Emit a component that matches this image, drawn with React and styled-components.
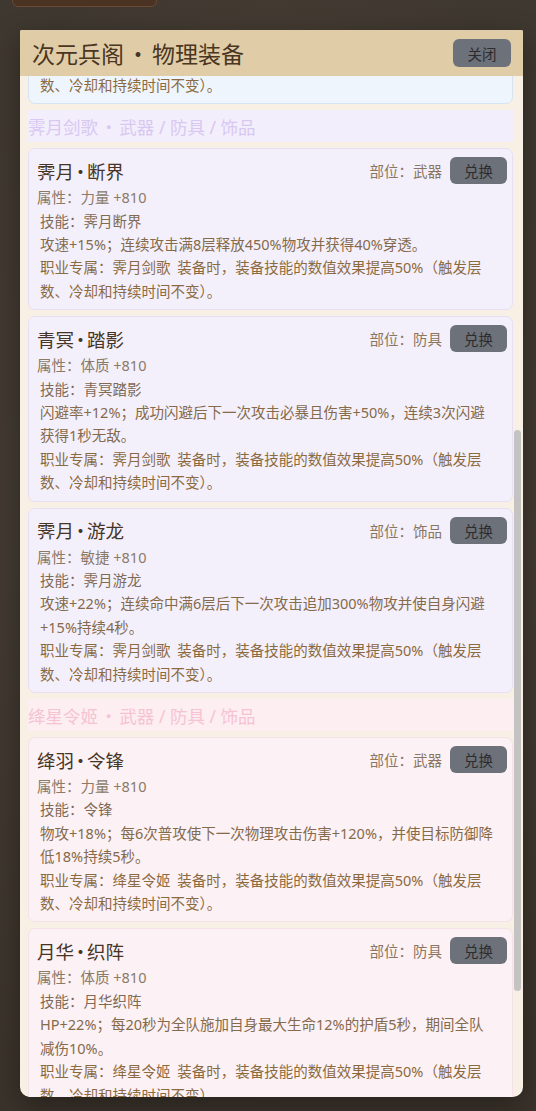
import React, { useLayoutEffect, useRef, useState, useCallback } from "react";
import styled, { createGlobalStyle } from "styled-components";

const GlobalStyle = createGlobalStyle`
  html, body { margin: 0; padding: 0; height: 100%; }
  body {
    overflow: hidden;
    font-family: "Noto Sans", "Noto Sans CJK SC", sans-serif;
    background: #3d362e;
  }
  #root { height: 100%; }
`;

const tones = {
  blue: { card: "#eef5fd", border: "#d5e3f2", band: "#eaf2fb", text: "#bcd2ee" },
  purple: { card: "#f4f0fb", border: "#e7dff3", band: "#f3eefb", text: "#d8c8f2" },
  pink: { card: "#fcf1f5", border: "#f4e2e8", band: "#fdeef2", text: "#f6c3d2" },
};

const Scene = styled.div`
  position: fixed;
  inset: 0;
  background:
    radial-gradient(ellipse at 50% 40%, rgba(90, 78, 64, 0.35), rgba(0, 0, 0, 0) 70%),
    linear-gradient(180deg, #3f3830 0%, #433b32 50%, #3a332b 100%);
`;

const TopPlank = styled.div`
  position: absolute;
  left: 12px;
  top: -10px;
  width: 143px;
  height: 15px;
  border-radius: 0 0 6px 6px;
  background: #4a3323;
  border: 1px solid #6a4a32;
`;

const Modal = styled.div`
  position: fixed;
  left: 20px;
  top: 30px;
  width: 503px;
  bottom: 14px;
  display: flex;
  flex-direction: column;
  background: #f8f0e4;
  border-radius: 2px 2px 10px 10px;
  overflow: hidden;
  box-shadow: 0 8px 28px rgba(0, 0, 0, 0.35);
`;

const Header = styled.div`
  flex: none;
  height: 46px;
  padding: 0 12px;
  display: flex;
  align-items: center;
  justify-content: space-between;
  background: #e0cda8;
`;

const Title = styled.h2`
  margin: 0;
  font-size: 23px;
  font-weight: 400;
  color: #4a3621;
`;

/* CJK-style middle dot, a little tighter than a full-width one */
const Dot = styled.span`
  font-family: "Noto Sans CJK SC", sans-serif;
  margin: 0 -0.15em;
`;

const GrayButton = styled.button`
  flex: none;
  width: ${(p) => p.$w}px;
  height: ${(p) => p.$h}px;
  padding: 0;
  border: 0;
  border-radius: 6px;
  background: #6c717a;
  color: #2c2c2e;
  font-family: inherit;
  font-size: 14.5px;
  cursor: pointer;
`;

const BodyWrap = styled.div`
  flex: 1;
  min-height: 0;
  position: relative;
`;

const Body = styled.div`
  position: relative;
  height: 100%;
  box-sizing: border-box;
  overflow-y: auto;
  padding: 0 10px 8px 8px;
  scrollbar-width: none;
  &::-webkit-scrollbar { display: none; }
`;

const Thumb = styled.div`
  position: absolute;
  right: 2px;
  width: 7px;
  border-radius: 4px;
  background: #c4c3c1;
  pointer-events: none;
`;

const List = styled.div`
  display: flex;
  flex-direction: column;
  gap: 6px;
  padding-top: 18px;
`;

const SectionBar = styled.div`
  height: 32px;
  display: flex;
  align-items: center;
  font-size: 17.5px;
  color: ${(p) => p.$tone.text};
  background: ${(p) => p.$tone.band};
  white-space: pre;
`;

const Card = styled.div`
  background: ${(p) => p.$tone.card};
  border: 1px solid ${(p) => p.$tone.border};
  border-radius: 7px;
  padding: 8px 8px 6px;
`;

const CardHead = styled.div`
  display: flex;
  align-items: center;
  justify-content: space-between;
  margin: 0 -3px 2px 0;
`;

const ItemName = styled.div`
  font-size: 18.5px;
  font-weight: 400;
  color: #463526;
  white-space: pre;
`;

const Slot = styled.div`
  display: flex;
  align-items: center;
  gap: 8px;
  font-size: 14.5px;
  color: #8a7560;
`;

const Line = styled.div`
  font-size: 14.5px;
  line-height: 23.4px;
  color: ${(p) => p.$color || "#8a7a68"};
  word-spacing: ${(p) => (p.$wide ? "3px" : "0")};
`;

const SkillBlock = styled.div`
  padding: 0 8px 0 3px;
`;

function Dotted({ text }) {
  const [a, b] = text.split("·");
  return (
    <>
      {a}
      <Dot>·</Dot>
      {b}
    </>
  );
}

const sections = [
  {
    key: "cang",
    tone: "blue",
    title: ["苍岚枪客 ", " 武器 / 防具 / 饰品"],
    items: [
      {
        name: "苍岚·破阵",
        slot: "武器",
        attr: "力量 +810",
        skill: "苍岚破阵",
        desc: "物攻+16%；每第4次攻击造成范围伤害（260%物攻），并使命中目标受到的物理伤害提高12%持续4秒，可叠加2层；叠满时自身暴击伤害额外提高15%，持续期间每次命中回复1%生命。",
        cls: "苍岚枪客",
      },
      {
        name: "苍岚·磐石",
        slot: "防具",
        attr: "体质 +810",
        skill: "苍岚磐石",
        desc: "HP+20%；受到攻击时有20%概率获得吸收最大生命8%伤害的护盾，持续3秒，护盾存在期间受到的控制效果持续时间缩短30%。",
        cls: "苍岚枪客",
      },
      {
        name: "苍岚·逐风",
        slot: "饰品",
        attr: "敏捷 +810",
        skill: "苍岚逐风",
        desc: "暴击率+10%；暴击后提高自身攻速18%与移速10%持续3秒，冷却期间再次暴击可刷新持续时间并额外回复2%生命；生命低于30%时，攻速加成翻倍，并免疫一次致命伤害（每场战斗限1次）。",
        cls: "苍岚枪客",
      },
    ],
  },
  {
    key: "ji",
    tone: "purple",
    title: ["霁月剑歌 ", " 武器 / 防具 / 饰品"],
    anchor: true,
    items: [
      {
        name: "霁月·断界",
        slot: "武器",
        attr: "力量 +810",
        skill: "霁月断界",
        desc: "攻速+15%；连续攻击满8层释放450%物攻并获得40%穿透。",
        cls: "霁月剑歌",
      },
      {
        name: "青冥·踏影",
        slot: "防具",
        attr: "体质 +810",
        skill: "青冥踏影",
        desc: "闪避率+12%；成功闪避后下一次攻击必暴且伤害+50%，连续3次闪避获得1秒无敌。",
        cls: "霁月剑歌",
      },
      {
        name: "霁月·游龙",
        slot: "饰品",
        attr: "敏捷 +810",
        skill: "霁月游龙",
        desc: "攻速+22%；连续命中满6层后下一次攻击追加300%物攻并使自身闪避+15%持续4秒。",
        cls: "霁月剑歌",
      },
    ],
  },
  {
    key: "jiang",
    tone: "pink",
    title: ["绛星令姬 ", " 武器 / 防具 / 饰品"],
    items: [
      {
        name: "绛羽·令锋",
        slot: "武器",
        attr: "力量 +810",
        skill: "令锋",
        desc: "物攻+18%；每6次普攻使下一次物理攻击伤害+120%，并使目标防御降低18%持续5秒。",
        cls: "绛星令姬",
      },
      {
        name: "月华·织阵",
        slot: "防具",
        attr: "体质 +810",
        skill: "月华织阵",
        desc: "HP+22%；每20秒为全队施加自身最大生命12%的护盾5秒，期间全队减伤10%。",
        cls: "绛星令姬",
      },
      {
        name: "星芒·流萤",
        slot: "饰品",
        attr: "敏捷 +810",
        skill: "星芒流萤",
        desc: "暴击率+12%；暴击后提高自身攻速20%持续3秒。",
        cls: "绛星令姬",
      },
    ],
  },
];

function ItemCard({ item, tone }) {
  return (
    <Card $tone={tone}>
      <CardHead>
        <ItemName>
          <Dotted text={item.name} />
        </ItemName>
        <Slot>
          <span>部位：{item.slot}</span>
          <GrayButton $w={57} $h={27}>兑换</GrayButton>
        </Slot>
      </CardHead>
      <Line>属性：{item.attr}</Line>
      <SkillBlock>
        <Line $color="#7f6a55">技能：{item.skill}</Line>
        <Line $color="#856a4b">{item.desc}</Line>
        <Line $color="#8c6a40" $wide>
          职业专属：{item.cls} 装备时，装备技能的数值效果提高50%（触发层数、冷却和持续时间不变）。
        </Line>
      </SkillBlock>
    </Card>
  );
}

export default function App() {
  const bodyRef = useRef(null);
  const anchorRef = useRef(null);
  const [thumb, setThumb] = useState({ top: 0, height: 0 });

  const measure = useCallback(() => {
    const el = bodyRef.current;
    if (!el) return;
    const { scrollTop, scrollHeight, clientHeight } = el;
    if (scrollHeight <= clientHeight) {
      setThumb({ top: 0, height: 0 });
      return;
    }
    setThumb({
      top: (clientHeight * scrollTop) / scrollHeight,
      height: (clientHeight * clientHeight) / scrollHeight,
    });
  }, []);

  useLayoutEffect(() => {
    if (bodyRef.current && anchorRef.current) {
      bodyRef.current.scrollTop = anchorRef.current.offsetTop - 34;
    }
    measure();
  }, [measure]);

  return (
    <>
      <GlobalStyle />
      <Scene>
        <TopPlank />
      </Scene>
      <Modal role="dialog" aria-label="次元兵阁 · 物理装备">
        <Header>
          <Title>
            次元兵阁 <Dot>·</Dot> 物理装备
          </Title>
          <GrayButton $w={58} $h={28}>关闭</GrayButton>
        </Header>
        <BodyWrap>
          <Body ref={bodyRef} onScroll={measure}>
            <List>
              {sections.map((sec) => (
                <React.Fragment key={sec.key}>
                  <SectionBar
                    $tone={tones[sec.tone]}
                    ref={sec.anchor ? anchorRef : undefined}
                  >
                    {sec.title[0]}
                    <Dot>·</Dot>
                    {sec.title[1]}
                  </SectionBar>
                  {sec.items.map((it) => (
                    <ItemCard key={it.name} item={it} tone={tones[sec.tone]} />
                  ))}
                </React.Fragment>
              ))}
            </List>
          </Body>
          {thumb.height > 0 && (
            <Thumb style={{ top: thumb.top, height: thumb.height }} />
          )}
        </BodyWrap>
      </Modal>
    </>
  );
}
